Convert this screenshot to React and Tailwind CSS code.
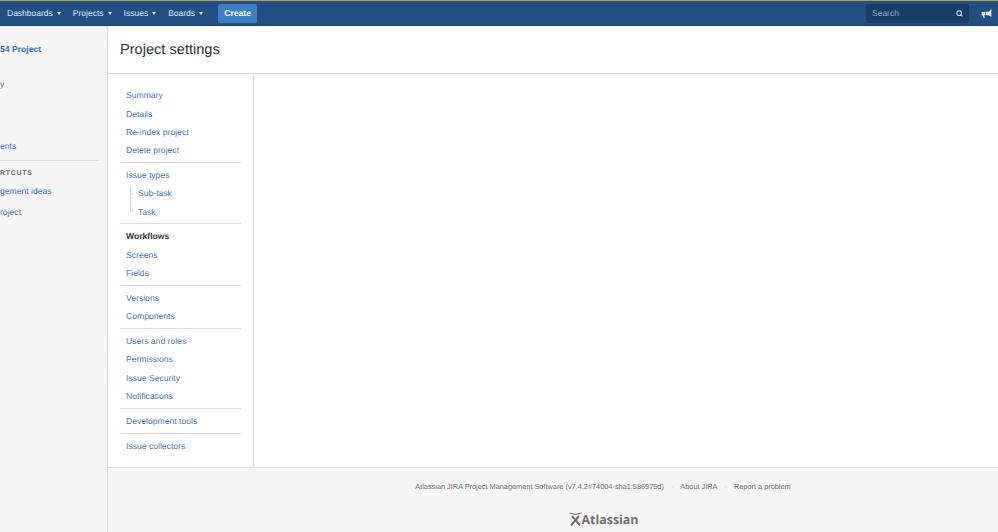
import React from "react";
import { Search } from "lucide-react";

function NavItem({ label }) {
  return (
    <div className="flex items-center gap-[4px] px-[6px] text-[8.5px] text-[#deebff]">
      <span>{label}</span>
      <span className="mt-[1px] h-0 w-0 border-x-[2.5px] border-t-[3px] border-x-transparent border-t-[#deebff]" />
    </div>
  );
}

function Item({ children, active, sub }) {
  return (
    <div className={`flex h-[18.3px] items-center pt-[1px] text-[8.6px] ${sub ? "pl-[12px]" : ""} ${active ? "font-bold text-[#333333]" : "text-[#4a7ab5]"}`}>
      {children}
    </div>
  );
}

function Group({ items, first }) {
  return (
    <div className={`mx-[12px] ${first ? "" : "mt-[2.8px] border-t border-[#dddddd] pt-[2.8px]"}`}>
      <div className="px-[6px]">
        {items.map((i) => (
          <Item key={i} active={i === "Workflows"}>{i}</Item>
        ))}
      </div>
    </div>
  );
}

export default function App() {
  return (
    <div className="flex h-[532px] w-[998px] flex-col overflow-hidden bg-white font-['Liberation_Sans',Arial,sans-serif] [text-rendering:geometricPrecision]">
      <header className="flex h-[26px] items-center border-t border-b border-t-[#b5a35c] border-b-[#173e69] bg-[#205081] pl-[1px] pr-[6px]">
        <NavItem label="Dashboards" />
        <NavItem label="Projects" />
        <NavItem label="Issues" />
        <NavItem label="Boards" />
        <div className="ml-[9px] flex h-[19px] w-[39px] items-center justify-center rounded-[2px] bg-[#3b7fc4] text-[8.6px] font-bold text-white">Create</div>
        <div className="ml-auto flex h-[19px] w-[103px] items-center justify-between rounded-[2px] bg-[#173e69] pl-[6px] pr-[6px] text-[8.5px] text-[#8ea8c5]">
          <span>Search</span>
          <Search size={7} strokeWidth={3.5} className="text-[#ccd8e6]" />
        </div>
        <svg className="ml-[12px]" width="11" height="11" viewBox="0 0 16 16" fill="#e6eef7">
          <path d="M15 1v12l-3.5-2.5H7V5.5h4.5z" />
          <path d="M1 5.5h5v5H4.6l1 4H3.4l-1-4H1z" />
        </svg>
      </header>

      <div className="flex min-h-0 flex-1">
        <aside className="flex w-[108px] shrink-0 flex-col border-r border-[#d9d9d9] bg-[#f5f5f5] text-[8.6px] text-[#4a7ab5]">
          <div className="mt-[17px] h-[12px] font-bold leading-[12px] text-[#3b73af]">54 Project</div>
          <div className="mt-[23px] h-[12px] leading-[12px]">y</div>
          <div className="mt-[50px] h-[12px] leading-[12px]">ents</div>
          <div className="mb-[7px] mr-[8px] mt-[8px] border-t border-[#dddddd]" />
          <div className="h-[11px] text-[6.9px] font-bold leading-[11px] tracking-[0.8px] text-[#6b6b6b]">RTCUTS</div>
          <div className="mt-[6px] h-[12px] leading-[12px]">gement ideas</div>
          <div className="mt-[9px] h-[12px] leading-[12px]">roject</div>
        </aside>

        <main className="flex min-w-0 flex-1 flex-col">
          <div className="flex h-[48px] items-center border-b border-[#d9d9d9] bg-white pl-[12px] pt-[2px] text-[14.6px] text-[#333333]">Project settings</div>
          <div className="flex h-[393.5px] border-b border-[#dddddd]">
            <nav className="w-[146px] shrink-0 border-r border-[#d9d9d9] pt-[12px]">
              <Group first items={["Summary", "Details", "Re-index project", "Delete project"]} />
              <div className="mx-[12px] mt-[2.8px] border-t border-[#dddddd] pt-[2.8px]">
                <div className="px-[6px]">
                  <Item>Issue types</Item>
                  <div className="relative">
                    <div className="absolute left-[4px] top-[3px] h-[25px] w-[3px] border-b border-l border-[#dddddd]" />
                    <div className="absolute left-[4px] top-[9px] h-0 w-[3px] border-t border-[#dddddd]" />
                    <Item sub>Sub-task</Item>
                    <Item sub>Task</Item>
                  </div>
                </div>
              </div>
              <Group items={["Workflows", "Screens", "Fields"]} />
              <Group items={["Versions", "Components"]} />
              <Group items={["Users and roles", "Permissions", "Issue Security", "Notifications"]} />
              <Group items={["Development tools"]} />
              <Group items={["Issue collectors"]} />
            </nav>
            <div className="flex-1 bg-white" />
          </div>
          <footer className="flex flex-1 flex-col items-center bg-[#f5f5f5] pl-[100px] text-[7.35px] text-[#707070]">
            <div className="mt-[14px] flex h-[10px] items-center leading-[10px]">
              <span>Atlassian JIRA Project Management Software (v7.4.2#74004-sha1:586975d)</span>
              <span className="mx-[7px] text-[#bbbbbb]">·</span>
              <span>About JIRA</span>
              <span className="mx-[7px] text-[#bbbbbb]">·</span>
              <span>Report a problem</span>
            </div>
            <div className="ml-[1px] mt-[20px] flex items-center">
              <svg width="13" height="14" viewBox="0 0 13 14" fill="none" stroke="#707070">
                <path d="M0.5 1 Q6.5 4 12.5 1" strokeWidth="1" />
                <path d="M3 4 L11 13.5 M10 4 L2 13.5" strokeWidth="2" />
              </svg>
              <span className="font-['Open_Sans',sans-serif] text-[12.4px] font-bold leading-[15px] text-[#707070]">Atlassian</span>
            </div>
          </footer>
        </main>
      </div>
    </div>
  );
}
